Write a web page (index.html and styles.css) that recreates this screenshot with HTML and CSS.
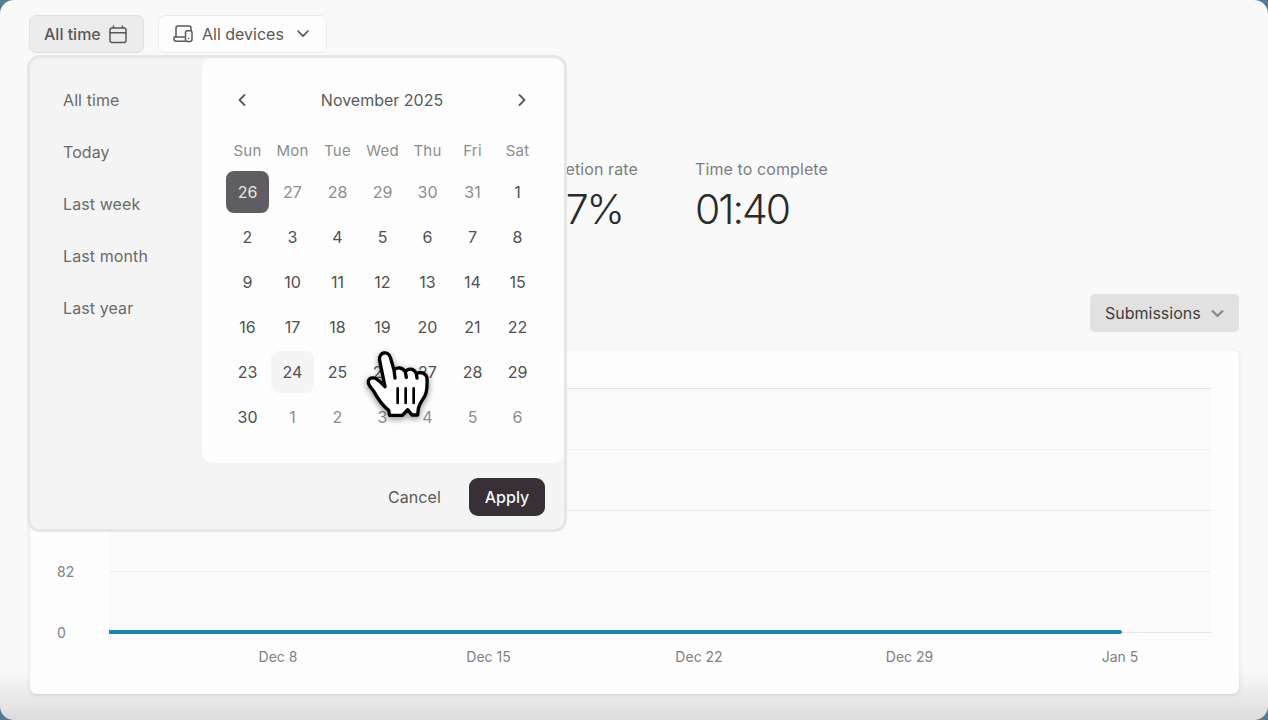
FILE: index.html
```html
<!DOCTYPE html>
<html lang="en">
<head>
    <meta charset="UTF-8">
    <meta name="viewport" content="width=device-width, initial-scale=1.0">
    <title>Insights</title>
    <link rel="stylesheet" href="styles.css">
</head>
<body>
<div class="page">

    <div class="filters">
        <button type="button" class="filter filter-time">
            All time
            <svg width="18" height="19" viewBox="0 0 18 19" fill="none" stroke="currentColor" stroke-width="1.5" stroke-linecap="round">
                <rect x="1" y="3" width="16" height="14.5" rx="2"/>
                <path d="M1 7.7h16M4.5 1v2M13.5 1v2"/>
            </svg>
        </button>
        <button type="button" class="filter filter-devices">
            <svg width="20" height="18" viewBox="0 0 20 18" fill="none" stroke="currentColor" stroke-width="1.5" stroke-linecap="round" stroke-linejoin="round">
                <path d="M3 12V3q0-2 2-2h11q2 0 2 2v2.5M11.5 12H1v2q0 2.2 2 2.2h9"/>
                <rect x="12.5" y="5.8" width="6.5" height="10.6" rx="1.8"/>
                <path d="M15.7 13.4v.2"/>
            </svg>
            All devices
            <svg width="12" height="8" viewBox="0 0 12 8" fill="none" stroke="currentColor" stroke-width="1.7" stroke-linecap="round" stroke-linejoin="round"><path d="M1 1l5 5.2L11 1"/></svg>
        </button>

        <div class="datepicker">
            <div class="dp-main">
                <ul class="presets">
                    <li>All time</li>
                    <li>Today</li>
                    <li>Last week</li>
                    <li>Last month</li>
                    <li>Last year</li>
                </ul>
                <div class="calendar">
                    <div class="month">
                        <svg width="8" height="12" viewBox="0 0 8 12" fill="none" stroke="currentColor" stroke-width="1.8" stroke-linecap="round" stroke-linejoin="round"><path d="M6.5 1l-5 5 5 5"/></svg>
                        <span>November 2025</span>
                        <svg width="8" height="12" viewBox="0 0 8 12" fill="none" stroke="currentColor" stroke-width="1.8" stroke-linecap="round" stroke-linejoin="round"><path d="M1.5 1l5 5-5 5"/></svg>
                    </div>
                    <div class="weekdays">
                        <span>Sun</span><span>Mon</span><span>Tue</span><span>Wed</span><span>Thu</span><span>Fri</span><span>Sat</span>
                    </div>
                    <div class="days">
                        <span class="selected">26</span><span class="out">27</span><span class="out">28</span><span class="out">29</span><span class="out">30</span><span class="out">31</span><span>1</span>
                        <span>2</span><span>3</span><span>4</span><span>5</span><span>6</span><span>7</span><span>8</span>
                        <span>9</span><span>10</span><span>11</span><span>12</span><span>13</span><span>14</span><span>15</span>
                        <span>16</span><span>17</span><span>18</span><span>19</span><span>20</span><span>21</span><span>22</span>
                        <span>23</span><span class="today">24</span><span>25</span><span>26</span><span>27</span><span>28</span><span>29</span>
                        <span>30</span><span class="out">1</span><span class="out">2</span><span class="out">3</span><span class="out">4</span><span class="out">5</span><span class="out">6</span>
                    </div>
                </div>
            </div>
            <div class="dp-footer">
                <button type="button" class="btn btn-cancel">Cancel</button>
                <button type="button" class="btn btn-apply">Apply</button>
            </div>
        </div>
    </div>

    <div class="stats">
        <div class="stat stat-rate">
            <div class="label">Completion rate</div>
            <div class="value">7%</div>
        </div>
        <div class="stat">
            <div class="label">Time to complete</div>
            <div class="value">01:40</div>
        </div>
    </div>

    <div class="toolbar">
        <button type="button" class="metric">
            Submissions
            <svg width="13" height="9" viewBox="0 0 13 9" fill="none" stroke="#8c8c8c" stroke-width="2.4"><path d="M1 1.5l5.5 5.3L12 1.5"/></svg>
        </button>
    </div>

    <div class="chart">
        <div class="plot">
            <div class="row"></div>
            <div class="row"></div>
            <div class="row"></div>
            <div class="row"><span>82</span></div>
            <div class="row row-zero"><span>0</span><div class="series"></div></div>
        </div>
        <div class="dates">
            <span>Dec 8</span><span>Dec 15</span><span>Dec 22</span><span>Dec 29</span><span>Jan 5</span>
        </div>
    </div>

    <svg class="cursor" width="66" height="70" viewBox="78 55 198 210" stroke="#000" stroke-linecap="round" stroke-linejoin="round">
        <path fill="#fff" stroke-width="10" d="M138 168L122 90C118 63 148 59 154 80L165 118C175 108 191 110 199 124C207 111 225 112 232 130C244 121 263 127 264 144C265 166 265 182 257 197C247 212 239 224 238 235L236 253H219L206 237L190 254H152L149 239C132 226 114 200 103 180C95 169 86 162 88 152C90 138 107 140 114 146C124 153 131 160 138 168ZM165 118L168 142M199 124L202 140M232 130L234 142"/>
        <path fill="none" stroke-width="8" d="M176 173v44M200 173v44M224 173v44"/>
    </svg>
</div>
</body>
</html>
```
FILE: styles.css
```css
* {
    box-sizing: border-box;
}
body {
    margin: 0;
    background-color: #547b94;
    font-family: Inter, "Liberation Sans", sans-serif;
    font-size: 16px;
    color: #595959;
}
button {
    font: inherit;
    color: inherit;
    border: none;
    cursor: pointer;
}
.page {
    position: relative;
    height: 720px;
    padding: 15px 29px 0;
    border-radius: 14px;
    overflow: hidden;
    background: linear-gradient(#f9f9f9 0, #f9f9f9 670px, #e9e9e9 697px, #dcdcdc 720px);
}
.filters {
    position: relative;
    display: flex;
    gap: 14px;
    height: 38px;
}
.filter {
    display: flex;
    align-items: center;
    border-radius: 7px;
    white-space: nowrap;
}
.filter-time {
    width: 115px;
    padding: 0 14px;
    gap: 8px;
    background-color: #ececec;
    border: 1px solid #e0e0e0;
    font-weight: 500;
}
.filter-devices {
    width: 169px;
    padding: 0 14px;
    gap: 9px;
    background-color: #fdfdfd;
    border: 1px solid #ececec;
}
.filter-devices svg:last-child {
    margin-left: 4px;
}
.datepicker {
    position: absolute;
    left: -2px;
    top: 40px;
    z-index: 2;
    width: 540px;
    height: 477px;
    border: 3px solid #e6e6e6;
    border-radius: 13px;
    background-color: #f4f4f4;
    overflow: hidden;
}
.dp-main {
    display: flex;
    height: 405px;
}
.presets {
    width: 172px;
    margin: 0;
    padding: 16px 0 0 33px;
    list-style: none;
    color: #6a6a6a;
    letter-spacing: 0.1px;
}
.presets li {
    height: 52px;
    line-height: 52px;
}
.calendar {
    flex: 1;
    padding: 24px 22px 0 23px;
    border-radius: 10px;
    background-color: #fdfdfd;
}
.month {
    display: flex;
    justify-content: space-between;
    align-items: center;
    height: 36px;
    padding: 0 16px 0 13px;
}
.weekdays, .days {
    display: grid;
    grid-template-columns: repeat(7, 45px);
    text-align: center;
}
.weekdays {
    margin-top: 22px;
    line-height: 22px;
    font-size: 15px;
    letter-spacing: 0.2px;
    color: #8c8c8c;
}
.days {
    margin-top: 8px;
    grid-auto-rows: 45px;
}
.days span {
    margin: 1px 1px 2px;
    line-height: 42px;
    border-radius: 8px;
    color: #505050;
}
.days .out {
    color: #8c8c8c;
}
.days .selected {
    background-color: #605d62;
    color: #e6e6e6;
}
.days .today {
    background-color: #f4f4f4;
}
.dp-footer {
    display: flex;
    justify-content: flex-end;
    gap: 12px;
    padding: 15px 19px 0;
}
.btn {
    height: 38px;
    padding: 0 16px;
    border-radius: 9px;
    background: none;
}
.btn-cancel {
    letter-spacing: 0.1px;
}
.btn-apply {
    width: 76px;
    padding: 0;
    background-color: #373037;
    color: #f6f6f6;
    font-weight: 500;
}
.stats {
    display: flex;
    gap: 57px;
    height: 77px;
    margin: 104px 0 0 487px;
}
.label {
    line-height: 24px;
    letter-spacing: 0.1px;
    color: #7d7d7d;
    white-space: nowrap;
}
.stat-rate {
    width: 122px;
}
.stat-rate .value {
    padding-right: 15px;
    text-align: right;
}
.value {
    margin-top: 4px;
    line-height: 48px;
    font-size: 41px;
    font-weight: 300;
    letter-spacing: -2px;
    color: #2b2b2b;
}
.toolbar {
    display: flex;
    justify-content: flex-end;
    margin-top: 60px;
}
.metric {
    display: flex;
    align-items: center;
    justify-content: space-between;
    width: 149px;
    height: 38px;
    padding: 0 15px;
    border-radius: 5px;
    background-color: #e1e1e1;
    color: #3e3e3e;
}
.chart {
    height: 344px;
    margin: 18px 0 0 1px;
    padding: 38px 14px 0 27px;
    border-radius: 7px;
    background-color: #fdfdfd;
    box-shadow: 0 1px 4px rgba(0, 0, 0, 0.12);
}
.plot {
    height: 245px;
    width: 1154px;
    background: linear-gradient(#fafafa, #fafafa) right / 1102px 100% no-repeat;
}
.row {
    position: relative;
    display: flex;
    height: 61px;
    margin-left: 52px;
    border-top: 1px solid #e6e6e6;
}
.row:nth-child(2), .row:nth-child(4) {
    border-top-color: #efefef;
}
.row span {
    width: 52px;
    margin: -10px 0 0 -52px;
    line-height: 20px;
    font-size: 14px;
    color: #808080;
}
.row-zero {
    height: 1px;
}
.series {
    width: 1013px;
    height: 4px;
    margin-top: -3px;
    border-radius: 0 2px 2px 0;
    background-color: #1787ad;
}
.dates {
    display: flex;
    margin: 14px 0 0 115.75px;
    font-size: 14px;
    line-height: 20px;
    color: #808080;
}
.dates span {
    flex: 0 0 210.5px;
    text-align: center;
}
.cursor {
    position: absolute;
    left: 365px;
    top: 349px;
    z-index: 3;
    filter: drop-shadow(0 2px 3px rgba(0, 0, 0, 0.45));
}
```
